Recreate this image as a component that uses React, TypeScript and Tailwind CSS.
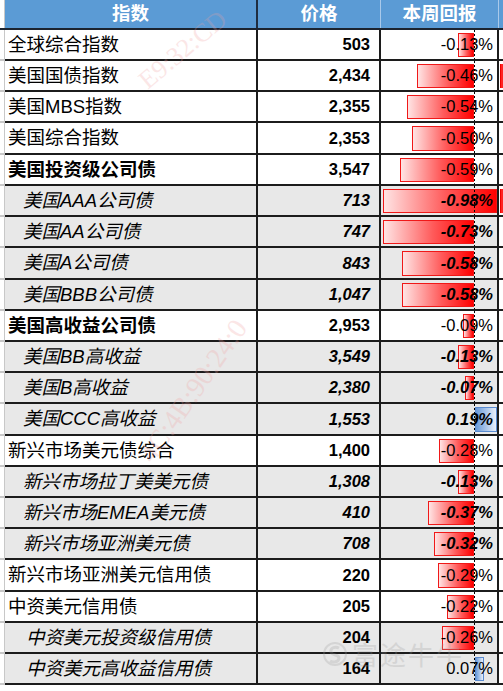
type Row = {
  name: string
  price: string
  ret: number
  kind: "main" | "bold" | "sub" | "sub2"
  h: string
  tail?: boolean
}

const rows: Row[] = [
  { name: "全球综合指数", price: "503", ret: -0.13, kind: "main", h: "h-[31px]" },
  { name: "美国国债指数", price: "2,434", ret: -0.46, kind: "main", h: "h-[31px]", tail: true },
  { name: "美国MBS指数", price: "2,355", ret: -0.54, kind: "main", h: "h-[31px]" },
  { name: "美国综合指数", price: "2,353", ret: -0.5, kind: "main", h: "h-[32px]" },
  { name: "美国投资级公司债", price: "3,547", ret: -0.59, kind: "bold", h: "h-[31px]" },
  { name: "美国AAA公司债", price: "713", ret: -0.98, kind: "sub", h: "h-[31px]", tail: true },
  { name: "美国AA公司债", price: "747", ret: -0.73, kind: "sub", h: "h-[31px]" },
  { name: "美国A公司债", price: "843", ret: -0.58, kind: "sub", h: "h-[32px]" },
  { name: "美国BBB公司债", price: "1,047", ret: -0.58, kind: "sub", h: "h-[31px]" },
  { name: "美国高收益公司债", price: "2,953", ret: -0.09, kind: "bold", h: "h-[31px]" },
  { name: "美国BB高收益", price: "3,549", ret: -0.13, kind: "sub", h: "h-[31px]" },
  { name: "美国B高收益", price: "2,380", ret: -0.07, kind: "sub", h: "h-[31px]" },
  { name: "美国CCC高收益", price: "1,553", ret: 0.19, kind: "sub", h: "h-[32px]" },
  { name: "新兴市场美元债综合", price: "1,400", ret: -0.28, kind: "main", h: "h-[31px]" },
  { name: "新兴市场拉丁美美元债", price: "1,308", ret: -0.13, kind: "sub", h: "h-[31px]" },
  { name: "新兴市场EMEA美元债", price: "410", ret: -0.37, kind: "sub", h: "h-[31px]" },
  { name: "新兴市场亚洲美元债", price: "708", ret: -0.32, kind: "sub", h: "h-[31px]" },
  { name: "新兴市场亚洲美元信用债", price: "220", ret: -0.29, kind: "main", h: "h-[32px]" },
  { name: "中资美元信用债", price: "205", ret: -0.22, kind: "main", h: "h-[31px]" },
  { name: "中资美元投资级信用债", price: "204", ret: -0.26, kind: "sub2", h: "h-[31px]" },
  { name: "中资美元高收益信用债", price: "164", ret: 0.07, kind: "sub2", h: "h-[31px]" },
]

// px per 1% on the data bar, axis sits 93px into the return cell
const SCALE = 125
const AXIS = 93

const Bar = ({ v }: { v: number }) => {
  if (v <= -0.9) {
    return (
      <div className="absolute top-[3px] bottom-[2px] left-[2px] right-0 border border-[#f01818] bg-[linear-gradient(to_right,#ffe4e4,#ff5a5a_55%,#ff0000)]" />
    )
  }
  const w = Math.abs(v) * SCALE
  if (v < 0) {
    return (
      <div
        className="absolute top-[3px] bottom-[2px] border border-[#f01818] bg-[linear-gradient(to_right,#ffe4e4,#ff5a5a_55%,#ff0000)]"
        style={{ left: AXIS - w, width: w }}
      />
    )
  }
  return (
    <div
      className="absolute top-[3px] bottom-[2px] border border-[#5a8bd0] bg-[linear-gradient(to_right,#6a9ad8,#e8effa)]"
      style={{ left: AXIS + 1, width: Math.min(w, 116 - AXIS - 1) }}
    />
  )
}

export default function App() {
  return (
    <div className="relative w-[503px] h-[691px] overflow-hidden bg-white text-black font-['Liberation_Sans','Noto_Sans_CJK_SC',sans-serif]">
      {/* header */}
      <div className="flex h-[30px] border-b-2 border-[#1c2430]">
        <div className="w-[5px] shrink-0 bg-white border-r border-[#c8c8c8]" />
        <div className="w-[253px] shrink-0 bg-[#5b9bd5] border-r-2 border-[#1f2d40] flex items-center justify-center text-white font-bold text-[18.5px]">
          指数
        </div>
        <div className="w-[123px] shrink-0 bg-[#5b9bd5] border-r border-[#a9c9ea] flex items-center justify-center text-white font-bold text-[18.5px]">
          价格
        </div>
        <div className="w-[118px] shrink-0 bg-[#5b9bd5] border-r border-[#a9c9ea] flex items-center justify-center text-white font-bold text-[18.5px]">
          本周回报
        </div>
        <div className="flex-1 bg-[#5b9bd5]" />
      </div>

      {rows.map((r, i) => {
        const gray = r.kind === "sub" || r.kind === "sub2"
        const bg = gray ? "bg-[#e8e8e8]" : "bg-white"
        return (
          <div key={i} className={`flex ${r.h}`}>
            <div className="w-[5px] shrink-0 bg-white border-r border-b-2 border-[#c8c8c8]" />
            <div
              className={`w-[253px] shrink-0 ${bg} border-r-2 border-b-2 border-[#1c1c1c] flex items-center text-[18.5px] whitespace-nowrap ${
                r.kind === "bold" ? "font-bold pl-[3px]" : r.kind === "sub" ? "italic pl-[18px]" : r.kind === "sub2" ? "italic pl-[21px]" : "pl-[3px]"
              }`}
            >
              {r.name}
            </div>
            <div
              className={`w-[123px] shrink-0 ${bg} border-r-2 border-b-2 border-[#1c1c1c] flex items-center justify-end pr-[9px] font-bold text-[16.5px] ${
                r.kind === "sub" ? "italic" : ""
              }`}
            >
              {r.price}
            </div>
            <div className={`relative w-[118px] shrink-0 ${bg} border-r-2 border-b-2 border-[#1c1c1c]`}>
              <Bar v={r.ret} />
              <div className="absolute top-0 bottom-0 left-[93px] w-px bg-[repeating-linear-gradient(to_bottom,#000_0_2px,transparent_2px_4px)]" />
              <div
                className={`relative h-full flex items-center justify-end pr-[4px] text-[16.5px] ${
                  r.kind === "sub" ? "italic font-bold" : ""
                }`}
              >
                {r.ret.toFixed(2)}%
              </div>
            </div>
            <div className="relative flex-1 bg-white border-b-2 border-[#1c1c1c]">
              {r.tail && <div className="absolute top-[3px] bottom-[2px] left-[1px] right-0 bg-[#f22] border-l border-[#e00]" />}
            </div>
          </div>
        )
      })}

      {/* watermarks */}
      <div className="absolute left-[130px] top-[30px] -rotate-[40deg] text-[26px] font-['Liberation_Serif',serif] text-[#f0a0a0] opacity-25 pointer-events-none">
        E9:32:CD
      </div>
      <div className="absolute left-[110px] top-[370px] -rotate-[55deg] text-[28px] font-['Liberation_Serif',serif] text-[#f0a0a0] opacity-25 pointer-events-none whitespace-nowrap">
        4C:4B:90:24:0
      </div>
      <div className="absolute left-[322px] top-[634px] flex items-center gap-[4px] opacity-25 pointer-events-none">
        <svg width="26" height="24" viewBox="0 0 26 24">
          <circle cx="13" cy="12" r="11" fill="none" stroke="#9a9a9a" strokeWidth="2" />
          <path d="M17 6c-4-2-9 0-8 4s8 2 8 6-6 5-9 3" fill="none" stroke="#9a9a9a" strokeWidth="3" />
        </svg>
        <span className="text-[26px] text-[#9a9a9a] font-['Noto_Sans_CJK_SC',sans-serif] tracking-[2px]">富途牛牛</span>
      </div>
    </div>
  )
}
